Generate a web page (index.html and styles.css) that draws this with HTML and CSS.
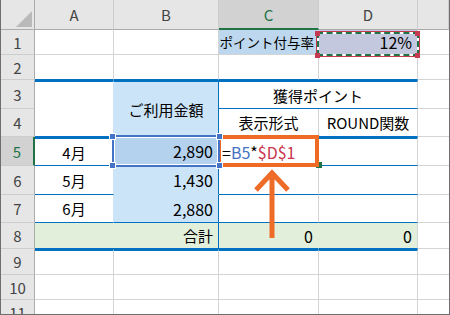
FILE: index.html
```html
<!DOCTYPE html>
<html lang="ja">
<head>
    <meta charset="UTF-8">
    <meta name="viewport" content="width=device-width, initial-scale=1.0">
    <title>ポイント計算</title>
    <link rel="stylesheet" href="styles.css">
</head>
<body>
    <div class="book">
        <!-- セル本体 -->
        <div class="grid cells">
            <div class="hd corner"></div>
            <div class="hd">A</div>
            <div class="hd">B</div>
            <div class="hd on">C</div>
            <div class="hd">D</div>
            <div class="hd"></div>

            <div class="rh">1</div>
            <div class="c"></div>
            <div class="c"></div>
            <div class="c sky r small">ポイント付与率</div>
            <div class="c lav r num">12%</div>
            <div class="c e"></div>

            <div class="rh">2</div>
            <div class="c lb"></div>
            <div class="c lb"></div>
            <div class="c lb"></div>
            <div class="c lb"></div>
            <div class="c e"></div>

            <div class="rh">3</div>
            <div class="c v2 tb lb rf"></div>
            <div class="c v2 blue m tb lb rb">ご利用金額</div>
            <div class="c h2 m tb lb">獲得ポイント</div>
            <div class="c e"></div>

            <div class="rh">4</div>
            <div class="c m lb">表示形式</div>
            <div class="c m lb">ROUND関数</div>
            <div class="c e"></div>

            <div class="rh on">5</div>
            <div class="c m tb lb rf">4月</div>
            <div class="c sel r num rb bf">2,890</div>
            <div class="c tb lb num formula">=<span class="ref-b">B5</span>*<span class="ref-d">$D$1</span></div>
            <div class="c tb lb"></div>
            <div class="c e"></div>

            <div class="rh">6</div>
            <div class="c m lb rf">5月</div>
            <div class="c blue r num rb bf">1,430</div>
            <div class="c lb"></div>
            <div class="c lb"></div>
            <div class="c e"></div>

            <div class="rh">7</div>
            <div class="c m lb rf">6月</div>
            <div class="c blue r num rb lb">2,880</div>
            <div class="c lb"></div>
            <div class="c lb"></div>
            <div class="c e"></div>

            <div class="rh">8</div>
            <div class="c h2 mint r lb rb">合計</div>
            <div class="c mint r num lb rm">0</div>
            <div class="c mint r num lb">0</div>
            <div class="c e"></div>

            <div class="rh">9</div>
            <div class="c tb"></div>
            <div class="c tb"></div>
            <div class="c tb"></div>
            <div class="c tb"></div>
            <div class="c e"></div>

            <div class="rh">10</div>
            <div class="c"></div>
            <div class="c"></div>
            <div class="c"></div>
            <div class="c"></div>
            <div class="c e"></div>

            <div class="rh">11</div>
            <div class="c"></div>
            <div class="c"></div>
            <div class="c"></div>
            <div class="c"></div>
            <div class="c e"></div>
        </div>

        <!-- 参照枠・注釈 -->
        <div class="grid marks">
            <div class="ants"></div>
            <div class="pick"></div>
            <div class="handle"></div>
            <div class="ring"></div>
            <svg class="arrow" width="40" height="72" viewBox="0 0 40 72">
                <path d="M20 5V70M4 22 20 5 36 22" fill="none" stroke="#ef6b28" stroke-width="5"/>
            </svg>
        </div>
    </div>
</body>
</html>
```

FILE: styles.css
```css
/* シート全体 */
* {
    box-sizing: border-box;
}

body {
    margin: 0;
    background: #fff;
}

.book {
    display: grid;
    width: 450px;
    height: 315px;
    overflow: hidden;
    border: 1px solid #6e6e6e;
    border-top: 0;
    background: #fff;
    font-family: "Noto Sans CJK JP", "Noto Sans", sans-serif;
    font-size: 15px;
    color: #000;
}

.book > .grid {
    grid-area: 1 / 1;
}

.grid {
    display: grid;
    grid-template-columns: 34px 79px 105px 100px 99px 1fr;
    grid-template-rows: 30px 25px 25px 29px 28px 29px 29px 28px 26px 26px 25px 25px;
}

/* 見出し */
.hd, .rh {
    display: flex;
    align-items: center;
    justify-content: center;
    background: #e6e6e6;
    color: #444;
}

.hd {
    border-right: 1px solid #cdcdcd;
    border-bottom: 1px solid #ababab;
}

.rh {
    border-right: 1px solid #ababab;
    border-bottom: 1px solid #cdcdcd;
}

.hd.on {
    background: #d2d2d2;
    color: #217346;
    border-bottom: 2px solid #217346;
}

.rh.on {
    background: #d2d2d2;
    color: #217346;
    border-right: 2px solid #217346;
}

.corner {
    position: relative;
    border-right-color: #ababab;
}

.corner::after {
    content: "";
    position: absolute;
    right: 2px;
    bottom: 2px;
    width: 16px;
    height: 16px;
    background: #b9b9b9;
    clip-path: polygon(100% 0, 100% 100%, 0 100%);
}

/* セル */
.c {
    display: flex;
    align-items: center;
    padding: 0 5px;
    border-right: 1px solid #d4d4d4;
    border-bottom: 1px solid #d4d4d4;
    white-space: nowrap;
}

.e { border-right: 0; }
.v2 { grid-row: span 2; }
.h2 { grid-column: span 2; }

.r { justify-content: flex-end; }
.m { justify-content: center; }
.num { font-size: 16px; }
.small { font-size: 13.5px; padding-right: 4px; }

.blue { background: #cce4f7; }
.sky { background: #bdd7ee; }
.lav { background: #c3c8de; }
.sel { background: #b4d2ee; }
.mint { background: #e2efda; }

/* 罫線 */
.lb { border-bottom-color: #0070c0; }
.tb { border-top: 2px solid #0070c0; }
.rb { border-right-color: #0070c0; }
.rf { border-right-color: #cce4f7; }
.bf { border-bottom-color: #cce4f7; }
.rm { border-right-color: #e2efda; }

.formula {
    padding-left: 3px;
}

.ref-b { color: #4472c4; }
.ref-d { color: #c9344f; }

/* 重ね描き */
.marks {
    position: relative;
    z-index: 1;
    pointer-events: none;
}

/* $D$1 の参照枠 */
.ants {
    grid-area: 2 / 5;
    position: relative;
    margin: 1px -2px -2px -3px;
    border: 1px solid #c43b51;
    box-shadow: inset 0 0 0 2px #fff;
}

.ants::before {
    content: "";
    position: absolute;
    inset: 0;
    border: 2px dashed #217346;
}

.ants::after {
    content: "";
    position: absolute;
    inset: -1px -1px -2px -2px;
    background:
        linear-gradient(#c43b51, #c43b51) left top / 5px 5px no-repeat,
        linear-gradient(#c43b51, #c43b51) right top / 5px 5px no-repeat,
        linear-gradient(#c43b51, #c43b51) left bottom / 5px 5px no-repeat,
        linear-gradient(#c43b51, #c43b51) right bottom / 5px 5px no-repeat;
}

/* B5 の参照枠 */
.pick {
    grid-area: 6 / 3;
    position: relative;
    margin: -2px -1px -1px -2px;
    border: 2px solid #4472c4;
    box-shadow: inset 0 0 0 1px #fff;
}

.pick::after {
    content: "";
    position: absolute;
    inset: -4px -5px -4px -5px;
    background:
        linear-gradient(#4472c4, #4472c4) left 1px top 1px / 5px 5px no-repeat,
        linear-gradient(#4472c4, #4472c4) right 1px top 1px / 5px 5px no-repeat,
        linear-gradient(#4472c4, #4472c4) left 1px bottom 1px / 5px 5px no-repeat,
        linear-gradient(#4472c4, #4472c4) right 1px bottom 1px / 5px 5px no-repeat,
        linear-gradient(#fff, #fff) left top / 7px 7px no-repeat,
        linear-gradient(#fff, #fff) right top / 7px 7px no-repeat,
        linear-gradient(#fff, #fff) left bottom / 7px 7px no-repeat,
        linear-gradient(#fff, #fff) right bottom / 7px 7px no-repeat;
}

/* アクティブセルのフィルハンドル */
.handle {
    grid-area: 6 / 4;
    justify-self: end;
    align-self: end;
    width: 6px;
    height: 6px;
    margin: 0 -3px -2px 0;
    background: #217346;
}

/* 注目枠と矢印 */
.ring {
    grid-area: 6 / 4;
    margin: -2px 0 -1px -2px;
    border: 4px solid #ee6a25;
}

.arrow {
    grid-column: 4;
    grid-row: 7 / 10;
    justify-self: start;
    align-self: start;
    margin: 2px 0 0 33px;
}
```
